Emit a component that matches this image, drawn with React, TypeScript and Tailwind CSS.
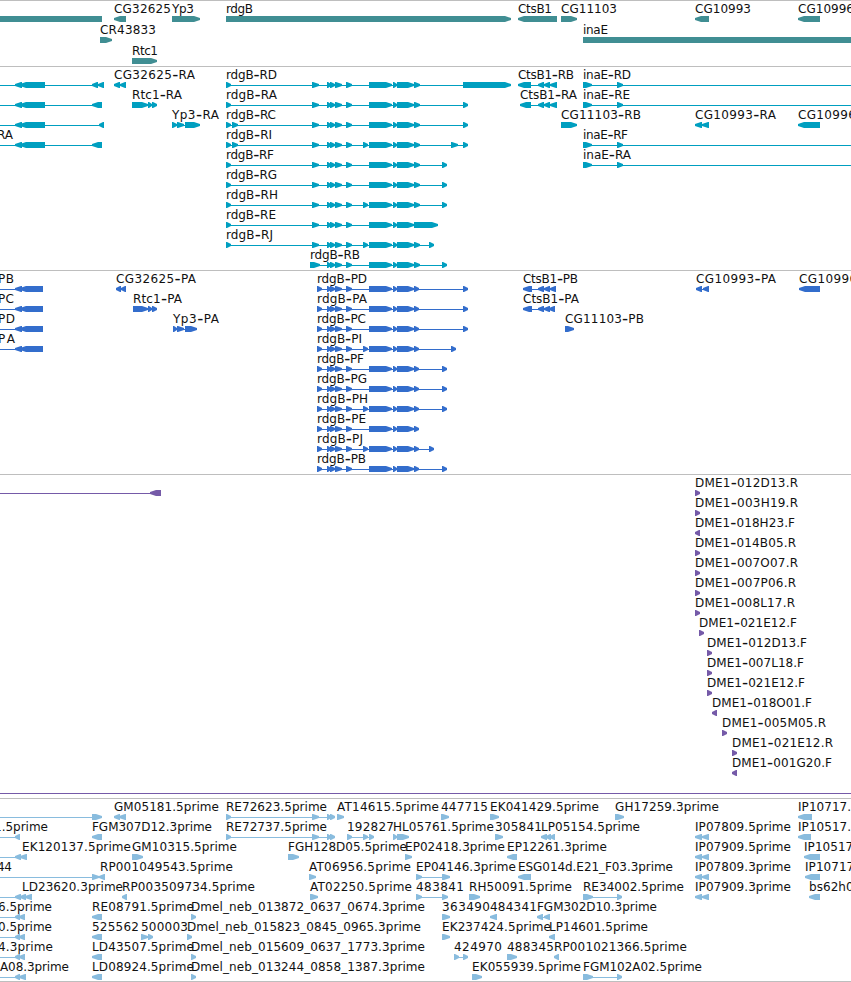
import React from "react";

type Dir = "r" | "l" | "b";
type Span = [number, number, Dir?];

interface Feature {
  row: number;
  dir: Dir;
  spans: Span[];
  // Optional connector extent when it runs past the drawn blocks.
  line?: [number, number];
  // Text, left edge, right edge.
  label?: [string, number, number];
}

const f = (
  row: number,
  dir: Dir,
  spans: Span[],
  label?: [string, number, number],
  line?: [number, number],
): Feature => ({ row, dir, spans, label, line });

const genes: Feature[] = [
  f(0, "b", [[0, 102]]),
  f(0, "l", [[114, 126]], ["CG32625", 114, 171]),
  f(0, "r", [[172, 200]], ["Yp3", 172, 194]),
  f(0, "r", [[226, 511]], ["rdgB", 226, 253]),
  f(0, "l", [[518, 557]], ["CtsB1", 518, 552]),
  f(0, "r", [[561, 577]], ["CG11103", 561, 617]),
  f(0, "l", [[695, 709]], ["CG10993", 695, 751]),
  f(0, "l", [[798, 820]], ["CG10996", 798, 854]),
  f(1, "r", [[100, 112]], ["CR43833", 100, 156]),
  f(1, "b", [[583, 851]], ["inaE", 583, 608]),
  f(2, "r", [[132, 157]], ["Rtc1", 132, 158]),
];

const small: Span[] = [[327, 331], [330, 335], [335, 342], [346, 352]];
const core: Span[] = [[369, 392], [393, 397], [397, 414]];
const mid: Span[] = [[312, 319], ...small];
const exon: Span = [414, 420];
const extra: Span = [363, 368];

const transcripts: Feature[] = [
  f(0, "l", [[15, 22], [20, 45], [92, 98], [98, 104]], undefined, [0, 104]),
  f(1, "l", [[15, 22], [20, 45], [92, 102]], undefined, [0, 102]),
  f(2, "l", [[15, 22], [20, 45], [99, 104]], undefined, [0, 104]),
  f(3, "l", [[15, 22], [20, 45], [92, 102]], ["RA", -3, 13], [0, 102]),
  f(0, "l", [[114, 120], [120, 126]], ["CG32625-RA", 114, 195]),
  f(1, "r", [[132, 148], [148, 152], [152, 157]], ["Rtc1-RA", 132, 182]),
  f(2, "r", [[172, 177], [177, 184], [185, 200]], ["Yp3-RA", 172, 219]),
  f(0, "r", [[226, 231], ...mid, ...core, exon, [463, 511]], ["rdgB-RD", 226, 277]),
  f(1, "r", [[226, 231], ...mid, ...core, exon, [463, 468]], ["rdgB-RA", 226, 277]),
  f(2, "r", [[226, 231], [232, 238], ...mid, ...core, exon, [463, 468]], ["rdgB-RC", 226, 276]),
  f(3, "r", [[226, 231], [232, 238], ...mid, extra, ...core, exon, [451, 458], [463, 468]], ["rdgB-RI", 226, 272]),
  f(4, "r", [[226, 231], ...mid, ...core, exon, [442, 447]], ["rdgB-RF", 226, 274]),
  f(5, "r", [[226, 231], ...mid, ...core, exon, [442, 447]], ["rdgB-RG", 226, 277]),
  f(6, "r", [[226, 231], ...mid, extra, ...core, exon, [442, 447]], ["rdgB-RH", 226, 278]),
  f(7, "r", [[226, 231], ...mid, ...core, [414, 438]], ["rdgB-RE", 226, 276]),
  f(8, "r", [[226, 231], ...mid, extra, ...core, exon, [429, 434]], ["rdgB-RJ", 226, 273]),
  f(9, "r", [[310, 320], ...small, ...core, exon, [442, 447]], ["rdgB-RB", 310, 360]),
  f(0, "l", [[518, 531], [538, 544], [544, 550], [550, 557]], ["CtsB1-RB", 518, 574]),
  f(1, "l", [[520, 531], [538, 544], [544, 550], [550, 557]], ["CtsB1-RA", 520, 577]),
  f(2, "r", [[561, 577]], ["CG11103-RB", 561, 641]),
  f(0, "r", [[583, 592], [617, 623]], ["inaE-RD", 583, 631], [583, 851]),
  f(1, "r", [[583, 592], [617, 623]], ["inaE-RE", 583, 630], [583, 851]),
  f(3, "r", [[583, 592], [617, 623]], ["inaE-RF", 583, 628], [583, 851]),
  f(4, "r", [[583, 592], [617, 623]], ["inaE-RA", 583, 631], [583, 851]),
  f(2, "l", [[695, 702], [702, 709]], ["CG10993-RA", 695, 776]),
  f(2, "l", [[798, 820]], ["CG10996-RA", 798, 879]),
];

const cds = (row: number, name: string, end: number, tail: Span[], withExtra = false) =>
  f(
    row,
    "r",
    [[317, 322], ...small, ...(withExtra ? [extra] : []), ...core, [414, 419], ...tail],
    [name, 317, end],
  );

const proteins: Feature[] = [
  f(0, "l", [[15, 22], [20, 43]], ["PB", -2, 14], [0, 43]),
  f(1, "l", [[15, 22], [20, 43]], ["PC", -2, 14], [0, 43]),
  f(2, "l", [[15, 22], [20, 43]], ["PD", -2, 15], [0, 43]),
  f(3, "l", [[15, 22], [20, 43]], ["PA", -2, 15], [0, 43]),
  f(0, "l", [[116, 121], [121, 126]], ["CG32625-PA", 116, 196]),
  f(1, "r", [[133, 148], [148, 152], [152, 157]], ["Rtc1-PA", 133, 182]),
  f(2, "r", [[173, 177], [177, 184], [185, 197]], ["Yp3-PA", 173, 219]),
  cds(0, "rdgB-PD", 367, [[463, 468]]),
  cds(1, "rdgB-PA", 367, [[463, 468]]),
  cds(2, "rdgB-PC", 366, [[463, 468]]),
  cds(3, "rdgB-PI", 362, [[451, 456]], true),
  cds(4, "rdgB-PF", 364, [[442, 447]]),
  cds(5, "rdgB-PG", 367, [[442, 447]]),
  cds(6, "rdgB-PH", 368, [[442, 447]], true),
  cds(7, "rdgB-PE", 366, []),
  cds(8, "rdgB-PJ", 363, [[429, 434]], true),
  cds(9, "rdgB-PB", 366, [[442, 447]]),
  f(0, "l", [[523, 532], [538, 544], [544, 550], [550, 556]], ["CtsB1-PB", 523, 578]),
  f(1, "l", [[523, 532], [538, 544], [544, 550], [549, 555]], ["CtsB1-PA", 523, 579]),
  f(2, "r", [[565, 574]], ["CG11103-PB", 565, 644]),
  f(0, "l", [[696, 702], [703, 709]], ["CG10993-PA", 696, 776]),
  f(0, "l", [[799, 820]], ["CG10996-PA", 799, 879]),
];

const dme = (row: number, dir: Dir, x: number, name: string, end: number) =>
  f(row, dir, [[x, x + 5]], ["DME1-" + name, x, end]);

const bacs: Feature[] = [
  f(0, "l", [[150, 161]], undefined, [0, 161]),
  dme(0, "r", 695, "012D13.R", 798),
  dme(1, "r", 695, "003H19.R", 798),
  dme(2, "l", 695, "018H23.F", 795),
  dme(3, "r", 695, "014B05.R", 796),
  dme(4, "r", 695, "007O07.R", 798),
  dme(5, "r", 695, "007P06.R", 796),
  dme(6, "r", 695, "008L17.R", 795),
  dme(7, "r", 699, "021E12.F", 797),
  dme(8, "r", 707, "012D13.F", 807),
  dme(9, "r", 707, "007L18.F", 804),
  dme(10, "r", 707, "021E12.F", 805),
  dme(11, "l", 712, "018O01.F", 812),
  dme(12, "r", 722, "005M05.R", 826),
  dme(13, "r", 732, "021E12.R", 833),
  dme(14, "l", 732, "001G20.F", 832),
  f(15, "b", [], undefined, [0, 851]),
];

const ests: Feature[] = [
  f(0, "r", [[92, 102]], undefined, [0, 102]),
  f(0, "l", [[114, 120], [119, 126]], ["GM05181.5prime", 114, 219]),
  f(0, "r", [[226, 231], [312, 319], [327, 331], [330, 335]], ["RE72623.5prime", 226, 327]),
  f(0, "r", [[337, 344]], ["AT14615.5prime", 337, 439]),
  f(0, "r", [[441, 449]], ["447715", 441, 488]),
  f(0, "r", [[490, 499]], ["EK041429.5prime", 490, 599]),
  f(0, "r", [[615, 624]], ["GH17259.3prime", 615, 719]),
  f(0, "l", [[798, 812]], ["IP10717.5prime", 798, 894]),

  f(1, "l", [[15, 20]], ["1.5prime", -6, 48], [0, 20]),
  f(1, "l", [[92, 102]], ["FGM307D12.3prime", 92, 212]),
  f(1, "r", [[226, 231], [312, 319], [327, 331], [330, 335]], ["RE72737.5prime", 226, 327]),
  f(1, "r", [[347, 352], [363, 368], [369, 374]], ["192827", 347, 394]),
  f(1, "r", [[393, 397], [397, 409]], ["HL05761.5prime", 393, 494]),
  f(1, "r", [[495, 503]], ["305841", 495, 542]),
  f(1, "l", [[541, 547], [546, 551], [550, 555]], ["LP05154.5prime", 541, 640]),
  f(1, "l", [[695, 702], [702, 709]], ["IP07809.5prime", 695, 791]),
  f(1, "l", [[798, 811]], ["IP10517.5prime", 798, 894]),

  f(2, "l", [[15, 21], [20, 27]], ["EK120137.5prime", 22, 131], [0, 27]),
  f(2, "r", [[132, 143]], ["GM10315.5prime", 132, 237]),
  f(2, "r", [[288, 299]], ["FGH128D05.5prime", 288, 407]),
  f(2, "r", [[405, 412]], ["EP02418.3prime", 405, 505]),
  f(2, "l", [[507, 517]], ["EP12261.3prime", 507, 607]),
  f(2, "l", [[695, 702], [702, 709]], ["IP07909.5prime", 695, 791]),
  f(2, "l", [[804, 820]], ["IP10517.3prime", 804, 900]),

  f(3, "r", [[92, 99], [99, 105, "l"]], ["44", -3, 12], [0, 105]),
  f(3, "b", [], ["RP001049543.5prime", 100, 233]),
  f(3, "r", [[309, 316]], ["AT06956.5prime", 309, 411]),
  f(3, "r", [[416, 422], [442, 450]], ["EP04146.3prime", 416, 516]),
  f(3, "l", [[518, 531]], ["ESG014d.E21_F03.3prime", 518, 673]),
  f(3, "l", [[695, 702], [702, 709]], ["IP07809.3prime", 695, 791]),
  f(3, "l", [[805, 820]], ["IP10717.3prime", 805, 901]),

  f(4, "l", [[15, 21], [20, 26], [25, 32]], ["LD23620.3prime", 22, 123], [0, 32]),
  f(4, "l", [[122, 127]], ["RP003509734.5prime", 122, 255]),
  f(4, "r", [[310, 318]], ["AT02250.5prime", 310, 412]),
  f(4, "r", [[416, 422], [442, 448]], ["483841", 416, 464]),
  f(4, "r", [[469, 480]], ["RH50091.5prime", 469, 572]),
  f(4, "r", [[583, 593], [617, 622]], ["RE34002.5prime", 583, 684]),
  f(4, "l", [[695, 702], [702, 709]], ["IP07909.3prime", 695, 791]),
  f(4, "l", [[809, 820]], ["bs62h08.y1", 809, 880]),

  f(5, "l", [[15, 20], [19, 25]], ["6.5prime", -2, 52], [0, 25]),
  f(5, "l", [[92, 102]], ["RE08791.5prime", 92, 194]),
  f(5, "r", [[191, 196]], ["Dmel_neb_013872_0637_0674.3prime", 191, 425]),
  f(5, "r", [[442, 450]], ["363490", 442, 490]),
  f(5, "l", [[490, 497]], ["484341", 490, 537]),
  f(5, "l", [[537, 543], [544, 550]], ["FGM302D10.3prime", 537, 657]),

  f(6, "l", [[15, 20], [19, 25]], ["0.5prime", -2, 52], [0, 25]),
  f(6, "l", [[92, 102]], ["525562", 92, 139]),
  f(6, "r", [[141, 148], [148, 153]], ["500003", 141, 188]),
  f(6, "r", [[187, 192]], ["Dmel_neb_015823_0845_0965.3prime", 187, 421]),
  f(6, "r", [[442, 450]], ["EK237424.5prime", 442, 551]),
  f(6, "l", [[549, 555]], ["LP14601.5prime", 549, 648]),

  f(7, "l", [[15, 20], [19, 25]], ["4.3prime", -2, 53], [0, 25]),
  f(7, "l", [[92, 102]], ["LD43507.5prime", 92, 194]),
  f(7, "r", [[191, 196]], ["Dmel_neb_015609_0637_1773.3prime", 191, 425]),
  f(7, "r", [[454, 459], [463, 468]], ["424970", 454, 502]),
  f(7, "r", [[507, 517]], ["488345", 507, 554]),
  f(7, "l", [[554, 559]], ["RP001021366.5prime", 554, 687]),

  f(8, "l", [[15, 20], [19, 26]], ["A08.3prime", 0, 69], [0, 26]),
  f(8, "l", [[92, 102]], ["LD08924.5prime", 92, 194]),
  f(8, "r", [[191, 196]], ["Dmel_neb_013244_0858_1387.3prime", 191, 425]),
  f(8, "r", [[472, 482]], ["EK055939.5prime", 472, 581]),
  f(8, "r", [[583, 593], [617, 622]], ["FGM102A02.5prime", 583, 702]),
];

function blockPoints([a, b]: Span, dir: Dir, c: number) {
  const tip = Math.min(b - a - 1, 6);
  if (dir === "r") return `${a},${c - 3} ${b - tip},${c - 3} ${b},${c - 0.9} ${b},${c + 0.9} ${b - tip},${c + 3} ${a},${c + 3}`;
  if (dir === "l") return `${b},${c - 3} ${a + tip},${c - 3} ${a},${c - 0.9} ${a},${c + 0.9} ${a + tip},${c + 3} ${b},${c + 3}`;
  return `${a},${c - 3} ${b},${c - 3} ${b},${c + 3} ${a},${c + 3}`;
}

// The hyphen is set larger and lowered so that it reads as a wide dash.
function LabelText({ value }: { value: string }) {
  const [head, tail] = value.split("-");
  if (tail === undefined) return <>{value}</>;
  return (
    <>
      {head}
      <tspan dy={1.4} className="text-[17px]">-</tspan>
      <tspan dy={-1.4}>{tail}</tspan>
    </>
  );
}

interface TrackProps {
  features: Feature[];
  height: number;
  color: string;
  pitch?: number;
}

function Track({ features, height, color, pitch = 20 }: TrackProps) {
  const center = (row: number) => 18 + row * pitch;
  return (
    <section className="border-t border-[#bebebe]">
      <svg width={851} height={height} viewBox={`0 0 851 ${height}`} className={`block ${color}`}>
        {features.map((item, i) => {
          const c = center(item.row);
          const n = item.spans.length;
          const line = item.line ?? (n > 1 ? [item.spans[0][0], item.spans[n - 1][1]] : null);
          return (
            <g key={i} fill="currentColor">
              {line && <rect x={line[0]} y={c} width={line[1] - line[0]} height={1} />}
              {item.spans.map((s, j) => (
                <polygon key={j} points={blockPoints(s, s[2] ?? item.dir, c)} />
              ))}
            </g>
          );
        })}
        {features.map((item, i) =>
          item.label ? (
            <text
              key={i}
              x={item.label[1]}
              y={center(item.row) - 6}
              textLength={item.label[2] - item.label[1]}
              className="fill-[#111111] font-['DejaVu_Sans',sans-serif] text-[12px]"
            >
              <LabelText value={item.label[0]} />
            </text>
          ) : null,
        )}
      </svg>
    </section>
  );
}

export default function App() {
  return (
    <main className="flex h-[982px] w-[851px] flex-col overflow-hidden bg-white">
      <Track features={genes} height={65} color="text-[#408e93]" pitch={21} />
      <Track features={transcripts} height={203} color="text-[#009fc0]" />
      <Track features={proteins} height={203} color="text-[#336dcc]" />
      <Track features={bacs} height={323} color="text-[#755aa8]" />
      <Track features={ests} height={182} color="text-[#89bcde]" />
      <div className="border-t border-[#bebebe]" />
    </main>
  );
}
